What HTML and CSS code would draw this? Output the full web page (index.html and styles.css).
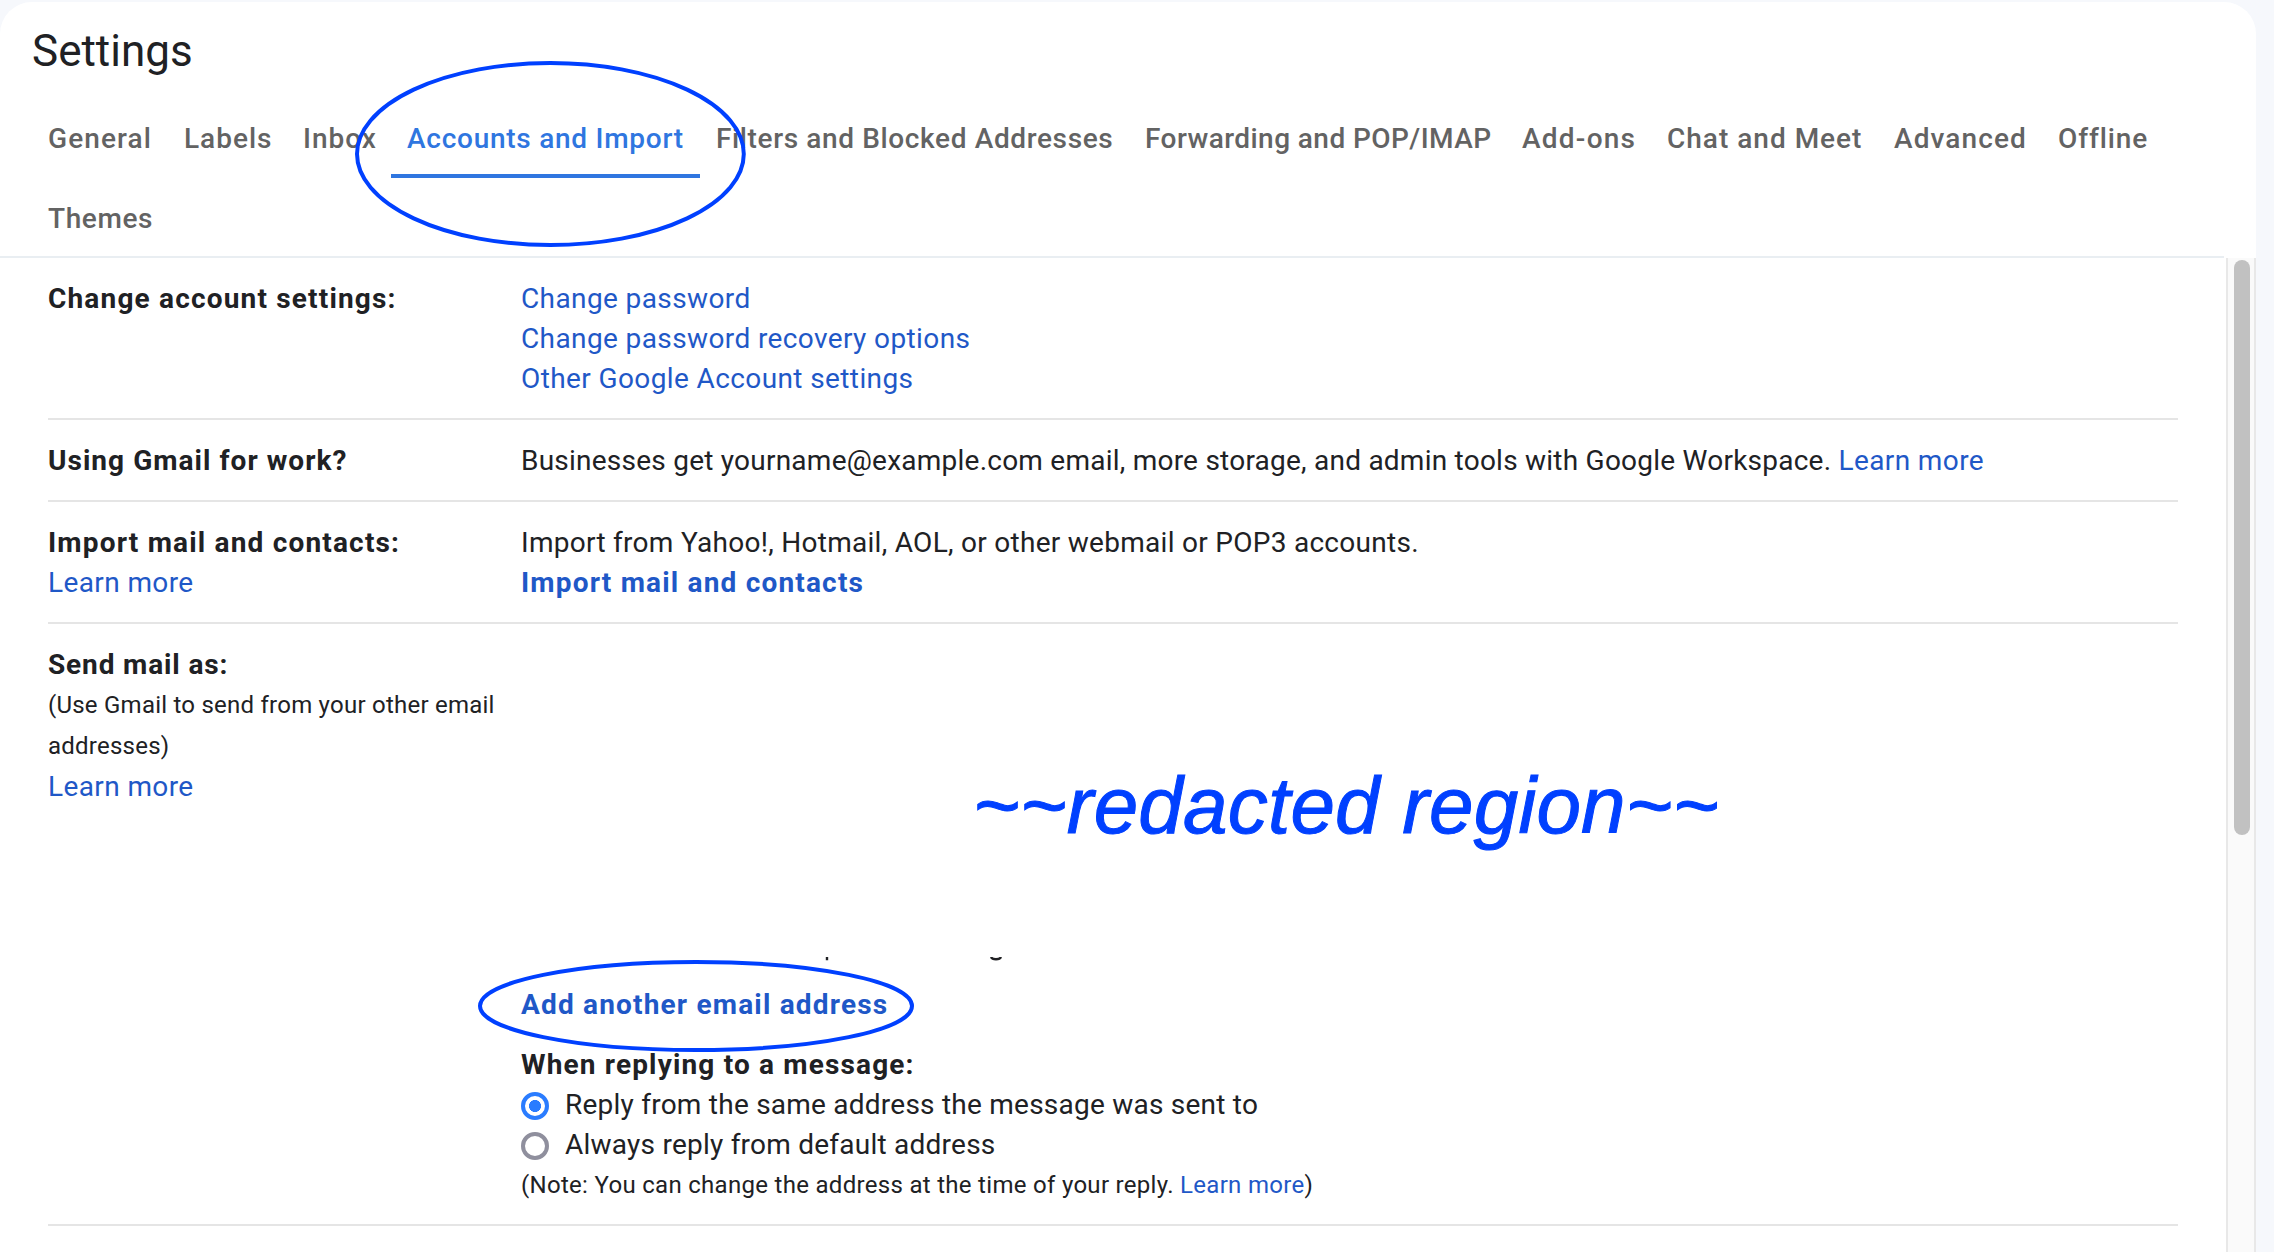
FILE: index.html
```html
<!DOCTYPE html>
<html lang="en">
<head>
<meta charset="utf-8">
<title>Settings</title>
<link rel="stylesheet" href="styles.css">
</head>
<body>
<div class="panel">
  <header class="head">
    <h1 class="title">Settings</h1>
    <nav class="tabs">
      <a class="tab tab-general">General</a>
      <a class="tab tab-labels">Labels</a>
      <a class="tab tab-inbox">Inbox</a>
      <a class="tab tab-accounts active">Accounts and Import</a>
      <a class="tab tab-filters">Filters and Blocked Addresses</a>
      <a class="tab tab-forwarding">Forwarding and POP/IMAP</a>
      <a class="tab tab-addons">Add-ons</a>
      <a class="tab tab-chat">Chat and Meet</a>
      <a class="tab tab-advanced">Advanced</a>
      <a class="tab tab-offline">Offline</a>
      <a class="tab tab-themes">Themes</a>
    </nav>
  </header>
  <div class="body">
    <main class="rows">
      <section class="row">
        <div class="label"><b>Change account settings:</b></div>
        <div class="value">
          <div><a class="wide">Change password</a></div>
          <div><a class="wide">Change password recovery options</a></div>
          <div><a class="wide">Other Google Account settings</a></div>
        </div>
      </section>
      <section class="row">
        <div class="label"><b class="snug">Using Gmail for work?</b></div>
        <div class="value">
          <div>Businesses get yourname@example.com email, more storage, and admin tools with Google Workspace. <a class="wide">Learn more</a></div>
        </div>
      </section>
      <section class="row">
        <div class="label">
          <div><b>Import mail and contacts:</b></div>
          <div><a class="wide">Learn more</a></div>
        </div>
        <div class="value">
          <div class="loose">Import from Yahoo!, Hotmail, AOL, or other webmail or POP3 accounts.</div>
          <div><a class="strong">Import mail and contacts</a></div>
        </div>
      </section>
      <section class="row">
        <div class="label">
          <div><b class="tight">Send mail as:</b></div>
          <div class="small hint">(Use Gmail to send from your other email addresses)</div>
          <div><a class="wide">Learn more</a></div>
        </div>
        <div class="value">
          <div class="aliases">
            <span class="notice">~~redacted region~~</span>
            <svg class="remnant" width="180" height="4" viewBox="0 0 180 4" fill="none" stroke="#202124" stroke-width="2.4"><path d="M2 0v3.2M166 0q1 2.3 5 2.3t5-2.3"/></svg>
          </div>
          <div class="add"><a class="strong">Add another email address</a></div>
          <div><b class="reply">When replying to a message:</b></div>
          <div class="option"><i class="radio on"></i><span>Reply from the same address the message was sent to</span></div>
          <div class="option"><i class="radio"></i><span>Always reply from default address</span></div>
          <div class="small note">(Note: You can change the address at the time of your reply. <a>Learn more</a>)</div>
        </div>
      </section>
    </main>
    <div class="scrollbar"><div class="thumb"></div></div>
  </div>
  <svg class="marks" width="2256" height="1252" fill="none" stroke="#0040ff" stroke-width="4">
    <ellipse cx="550.4" cy="154" rx="193.4" ry="91"/>
    <ellipse cx="696" cy="1006" rx="216" ry="44"/>
  </svg>
</div>
</body>
</html>
```

FILE: styles.css
```css
* { box-sizing: border-box; }

body {
  margin: 0;
  height: 1252px;
  padding: 2px 18px 0 0;
  overflow: hidden;
  background: #f6f8fc;
  color: #202124;
  font: 400 28px/40px Roboto, "Liberation Sans", sans-serif;
  letter-spacing: 0.235px;
}

.panel {
  position: relative;
  display: flex;
  flex-direction: column;
  height: 1250px;
  background: #fff;
  border-radius: 32px 32px 0 0;
}

.head {
  height: 256px;
  margin-right: 32px;
  border-bottom: 2px solid #e9eef2;
}

.title {
  margin: 0;
  padding: 21px 0 0 32px;
  height: 94px;
  font-size: 44px;
  line-height: 56px;
  font-weight: 400;
  letter-spacing: 0;
}

.tabs {
  display: flex;
  flex-wrap: wrap;
  padding-left: 32px;
}

.tab {
  height: 80px;
  padding: 23px 0 0 16px;
  font-weight: 500;
  white-space: nowrap;
  color: #636363;
}

.tab-general { width: 136px; letter-spacing: 1.1px; }
.tab-labels { width: 119px; letter-spacing: 1px; }
.tab-inbox { width: 104px; letter-spacing: 1px; }
.tab-accounts { width: 309px; letter-spacing: 0.74px; }
.tab-filters { width: 429px; letter-spacing: 0.63px; }
.tab-forwarding { width: 377px; letter-spacing: 0.44px; }
.tab-addons { width: 145px; letter-spacing: 1.25px; }
.tab-chat { width: 227px; letter-spacing: 1px; }
.tab-advanced { width: 164px; letter-spacing: 1.1px; }
.tab-offline { width: 121px; letter-spacing: 0.9px; }
.tab-themes { width: 136px; letter-spacing: 0.6px; }

.active {
  height: 82px;
  margin-bottom: -2px;
  color: #2f76e0;
  border-bottom: 4px solid #2f76e0;
}

.body {
  display: flex;
  flex: 1;
  justify-content: space-between;
  overflow: hidden;
}

.rows {
  width: 2130px;
  margin-left: 48px;
}

.row {
  display: flex;
  padding: 21px 0 19px;
  border-bottom: 2px solid #e5e5e5;
}

.label { width: 473px; }

.value { white-space: nowrap; }

a { color: #1f58c7; }

b, .strong { font-weight: 700; letter-spacing: 1.18px; }

.snug { letter-spacing: 1.04px; }
.tight { letter-spacing: 0.86px; }
.reply { letter-spacing: 1.16px; }
.wide { letter-spacing: 0.39px; }
.loose { letter-spacing: 0.28px; }

.small { font-size: 24px; }

.hint {
  width: 452px;
  padding-bottom: 1px;
  line-height: 40.5px;
}

.aliases {
  position: relative;
  height: 340px;
}

.notice {
  position: absolute;
  left: 452px;
  top: 111px;
  width: 744px;
  overflow: hidden;
  font: italic 80px/100px "Liberation Sans", sans-serif;
  letter-spacing: 0.2px;
  color: #0040ff;
  -webkit-text-stroke: 1px #0040ff;
}

.remnant {
  position: absolute;
  left: 304px;
  top: 312px;
}

.add { padding-bottom: 20px; }

.option {
  display: flex;
  align-items: center;
  gap: 16px;
}

.radio {
  width: 28px;
  height: 28px;
  margin-top: 2px;
  border: 4px solid #8f8f9d;
  border-radius: 50%;
}

.on {
  border-color: #2a7cff;
  background: radial-gradient(circle, #2a7cff 5.7px, #fff 6.3px);
}

.note { letter-spacing: 0.3px; }

.scrollbar {
  width: 30px;
  padding: 2px 4px 0 6px;
  background: #fafafa;
  border: 2px solid #e8e8e8;
  border-width: 0 2px;
}

.thumb {
  width: 16px;
  height: 575px;
  border-radius: 8px;
  background: #c1c1c1;
}

.marks {
  position: absolute;
  left: 0;
  top: -2px;
}
```
